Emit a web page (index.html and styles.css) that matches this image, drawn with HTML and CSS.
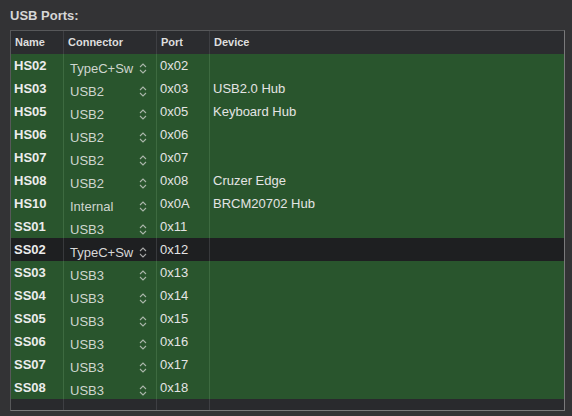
FILE: index.html
```html
<!DOCTYPE html>
<html lang="en">
<head>
  <meta charset="UTF-8">
  <title>USB Ports</title>
  <link rel="stylesheet" href="styles.css">
</head>
<body>
  <div class="panel">
    <h3 class="panel-title">USB Ports:</h3>
    <div class="ports-table">
      <div class="row head">
        <div class="cell">Name</div>
        <div class="cell">Connector</div>
        <div class="cell">Port</div>
        <div class="cell">Device</div>
      </div>
      <div id="rows"></div>
      <div class="row filler">
        <div class="cell"></div>
        <div class="cell"></div>
        <div class="cell"></div>
        <div class="cell"></div>
      </div>
    </div>
  </div>
  <script>
    const ports = [
      ['HS02', 'TypeC+Sw', '0x02', ''],
      ['HS03', 'USB2', '0x03', 'USB2.0 Hub'],
      ['HS05', 'USB2', '0x05', 'Keyboard Hub'],
      ['HS06', 'USB2', '0x06', ''],
      ['HS07', 'USB2', '0x07', ''],
      ['HS08', 'USB2', '0x08', 'Cruzer Edge'],
      ['HS10', 'Internal', '0x0A', 'BRCM20702 Hub'],
      ['SS01', 'USB3', '0x11', ''],
      ['SS02', 'TypeC+Sw', '0x12', ''],
      ['SS03', 'USB3', '0x13', ''],
      ['SS04', 'USB3', '0x14', ''],
      ['SS05', 'USB3', '0x15', ''],
      ['SS06', 'USB3', '0x16', ''],
      ['SS07', 'USB3', '0x17', ''],
      ['SS08', 'USB3', '0x18', '']
    ];
    const selected = 'SS02';
    const chevron = '<svg class="chevron" width="8" height="11" viewBox="0 0 8 11">' +
      '<path d="M1 4 L4 1 L7 4 M1 7 L4 10 L7 7" fill="none" stroke="currentColor" stroke-width="1.1"/></svg>';

    const rows = document.getElementById('rows');
    ports.forEach(([name, connector, port, device]) => {
      const row = document.createElement('div');
      row.className = 'row' + (name === selected ? ' selected' : '');
      row.innerHTML =
        `<div class="cell name">${name}</div>` +
        `<div class="cell popup"><span>${connector}</span>${chevron}</div>` +
        `<div class="cell port">${port}</div>` +
        `<div class="cell device">${device}</div>`;
      rows.appendChild(row);
    });
  </script>
</body>
</html>
```

FILE: styles.css
```css
:root {
  --bg-color: #333335;
  --head-bg: #2b2c2f;
  --row-bg: #29552d;
  --row-line: #3d6a40;
  --selected-bg: #1e1f21;
  --text-color: #e4e4e4;
  --dim-text: #cfd6cf;
}
body {
  margin: 0;
  background: var(--bg-color);
  color: var(--text-color);
  font-family: "Liberation Sans", Arial, sans-serif;
}
.panel {
  padding: 7px 7px 0 10px;
}
.panel-title {
  margin: 0 0 6px;
  font-size: 13px;
  line-height: 17px;
  font-weight: bold;
  color: #d6d6d6;
}
.ports-table {
  width: 553px;
  border-top: 1px solid #57585a;
  border-left: 1px solid #57585a;
  border-right: 1px solid #7a7a7b;
  border-bottom: 1px solid #7a7a7b;
  background: var(--head-bg);
}
.row {
  display: grid;
  grid-template-columns: 52px 93px 53px 1fr;
  height: 23px;
  background: var(--row-bg);
}
.cell {
  padding-left: 3px;
  font-size: 13px;
  line-height: 23px;
  white-space: nowrap;
  overflow: hidden;
}
.cell + .cell {
  border-left: 1px solid var(--row-line);
}
.head {
  background: var(--head-bg);
}
.head .cell {
  padding-left: 4px;
  font-size: 11px;
  font-weight: bold;
  color: #dedede;
}
.head .cell + .cell,
.filler .cell + .cell {
  border-left-color: #3e3f43;
}
.filler {
  height: 11px;
  background: #292a2d;
}
.name {
  font-weight: bold;
  color: #ececec;
}
.popup {
  display: flex;
  justify-content: space-between;
  align-items: flex-start;
  padding: 6px 9px 0 6px;
  line-height: 17px;
  color: var(--dim-text);
}
.chevron {
  margin-top: 3px;
  color: #aab6aa;
}
.selected {
  background: var(--selected-bg);
}
.selected .cell + .cell {
  border-left-color: #38393c;
}
.selected .popup {
  color: #d8d8d8;
}
.selected .chevron {
  color: #a8a8a8;
}
```
